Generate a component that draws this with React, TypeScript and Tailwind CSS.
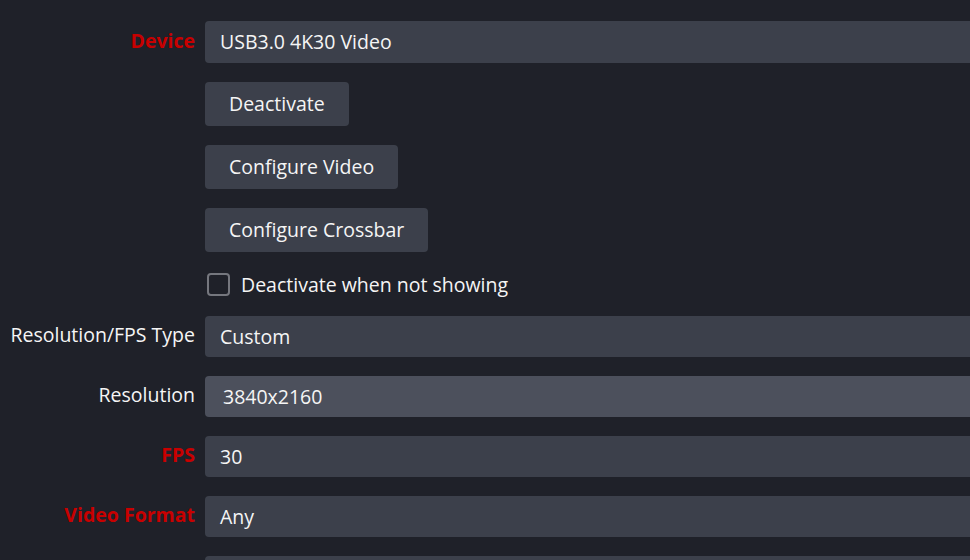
const fields = [
  { label: "Resolution/FPS Type", value: "Custom", required: false, active: false },
  { label: "Resolution", value: "3840x2160", required: false, active: true },
  { label: "FPS", value: "30", required: true, active: false },
  { label: "Video Format", value: "Any", required: true, active: false },
  { label: "", value: "", required: false, active: false },
]

const buttons = ["Deactivate", "Configure Video", "Configure Crossbar"]

function Label({ text, required }: { text: string; required?: boolean }) {
  return (
    <div
      className={
        "w-[195px] shrink-0 pb-[3px] text-right " +
        (required ? "font-bold text-[#c80000]" : "text-[#f5f5f5]")
      }
    >
      {text}
    </div>
  )
}

export default function App() {
  return (
    <div
      className="h-[560px] w-[970px] overflow-hidden bg-[#1f2129] pt-[21px] text-[19.5px] text-[#f5f5f5]"
      style={{ fontFamily: '"Open Sans", sans-serif' }}
    >
      <div className="flex flex-col gap-[19px]">
        {/* Device */}
        <div className="flex items-center gap-[10px]">
          <Label text="Device" required />
          <div className="flex h-[42px] flex-1 items-center rounded-l bg-[#3c404b] pl-[15px]">
            USB3.0 4K30 Video
          </div>
        </div>

        {buttons.map((b) => (
          <div key={b} className="flex gap-[10px]">
            <div className="w-[195px] shrink-0" />
            <button className="h-[44px] rounded bg-[#3c404b] px-6 text-[#f5f5f5]">{b}</button>
          </div>
        ))}

        {/* Checkbox */}
        <div className="flex h-[26px] items-center gap-[10px]">
          <div className="w-[195px] shrink-0" />
          <label className="flex items-center gap-[11px] pl-[2px]">
            <span className="h-[23px] w-[23px] rounded-[4px] border-2 border-[#75777e]" />
            <span className="pt-[1px]">Deactivate when not showing</span>
          </label>
        </div>

        {fields.map((f, i) => (
          <div key={i} className="flex items-center gap-[10px]">
            <Label text={f.label} required={f.required} />
            <div
              className={
                "flex h-[41px] flex-1 items-center rounded-l " +
                (f.active ? "bg-[#4c505c] pl-[18px]" : "bg-[#3c404b] pl-[15px]")
              }
            >
              {f.value}
            </div>
          </div>
        ))}
      </div>
    </div>
  )
}
